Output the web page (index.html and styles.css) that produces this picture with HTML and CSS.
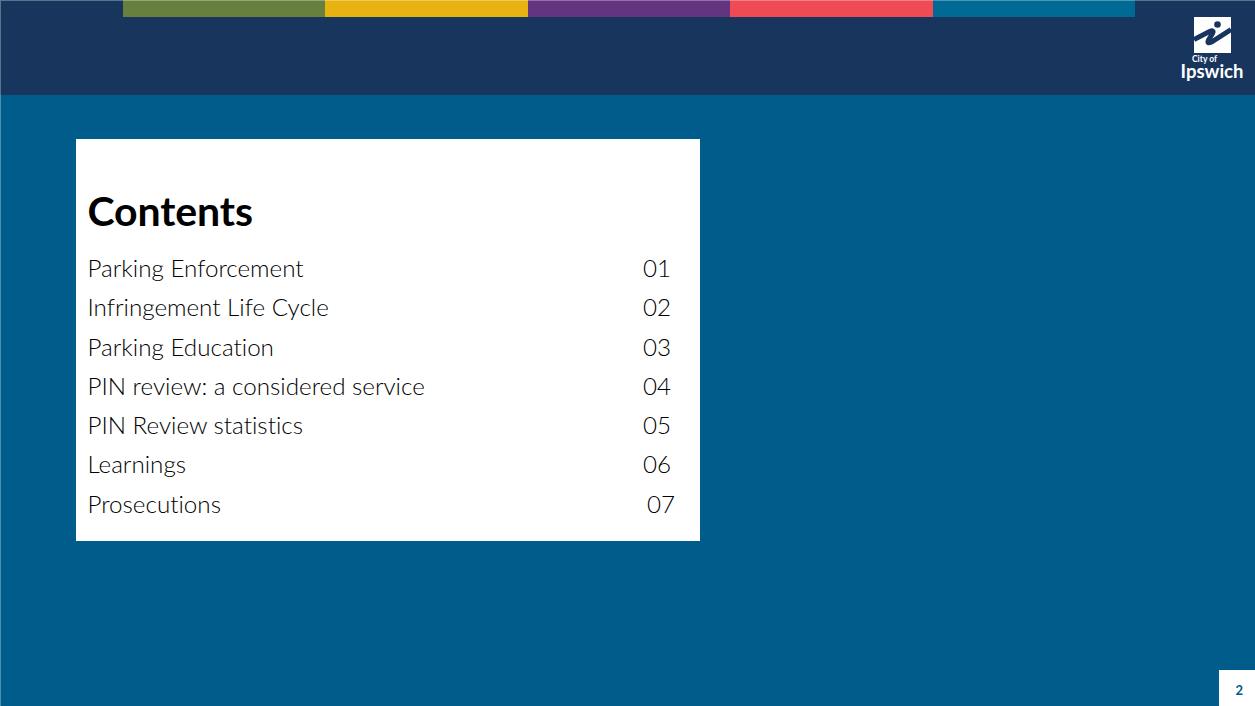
FILE: index.html
```
<!DOCTYPE html>
<html lang="en">
<head>
<meta charset="utf-8">
<title>Contents</title>
<link rel="stylesheet" href="styles.css">
</head>
<body>
<div class="slide">
  <header class="top">
    <div class="stripes">
      <span class="stripe green"></span>
      <span class="stripe yellow"></span>
      <span class="stripe purple"></span>
      <span class="stripe red"></span>
      <span class="stripe blue"></span>
    </div>
    <div class="logo">
      <svg class="mark" viewBox="0 0 37 36" width="37" height="36" aria-hidden="true">
        <rect width="37" height="36" fill="#fff"/>
        <circle cx="23.5" cy="7.5" r="3.3" fill="#18355e"/>
        <path d="M0 22.5 L15.5 14.5 Q20.5 12.5 18.5 16.5 L14.5 23 Q12.5 27.5 17.5 25 L37 12.5" fill="none" stroke="#18355e" stroke-width="5"/>
      </svg>
      <span class="city">City of</span>
      <span class="name">Ipswich</span>
    </div>
  </header>
  <main class="body">
    <section class="card">
      <h1>Contents</h1>
      <ul class="toc">
        <li><span>Parking Enforcement</span><span class="num">01</span></li>
        <li><span>Infringement Life Cycle</span><span class="num">02</span></li>
        <li><span>Parking Education</span><span class="num">03</span></li>
        <li><span>PIN review: a considered service</span><span class="num">04</span></li>
        <li><span>PIN Review statistics</span><span class="num">05</span></li>
        <li><span>Learnings</span><span class="num">06</span></li>
        <li><span>Prosecutions</span><span class="num shifted">07</span></li>
      </ul>
    </section>
  </main>
  <div class="page">2</div>
</div>
</body>
</html>
```
FILE: styles.css
```
html, body {
  margin: 0;
  padding: 0;
}
body {
  width: 1255px;
  height: 706px;
  overflow: hidden;
  font-family: "Lato", "Open Sans", sans-serif;
  font-variant-ligatures: none;
}
.slide {
  position: relative;
  width: 1255px;
  height: 706px;
  background: #005c8a;
  display: flex;
  flex-direction: column;
}
.slide::after {
  content: "";
  position: absolute;
  inset: 0;
  box-shadow: inset 1px 1px 0 rgba(255, 255, 255, 0.3);
  pointer-events: none;
}
.top {
  height: 95px;
  flex: none;
  background: #18355e;
  display: flex;
  justify-content: space-between;
  align-items: flex-start;
  padding-left: 123px;
  box-sizing: border-box;
}
.stripes {
  display: flex;
  width: 1012px;
  height: 16.5px;
}
.stripe {
  flex: 1;
}
.green { background: #68803d; }
.yellow { background: #e8b311; }
.purple { background: #633581; }
.red { background: #f04a55; }
.blue { background: #006a94; }
.logo {
  width: 64px;
  margin-right: 11px;
  padding-top: 17px;
  display: flex;
  flex-direction: column;
  align-items: center;
  color: #fff;
}
.mark {
  display: block;
}
.city {
  align-self: flex-start;
  margin: 2px 0 0 12px;
  font-size: 8.5px;
  line-height: 8px;
  font-weight: 700;
}
.name {
  font-size: 18.5px;
  line-height: 14px;
  font-weight: 700;
  margin-top: 1px;
}
.body {
  flex: 1;
  padding: 44px 0 0 76px;
}
.card {
  width: 624px;
  height: 402px;
  box-sizing: border-box;
  background: #fff;
  padding: 47px 0 0 11.5px;
}
h1 {
  margin: 0;
  font-size: 41px;
  line-height: 50px;
  font-weight: 700;
  color: #000;
  letter-spacing: -0.1px;
}
.toc {
  list-style: none;
  margin: 12px 0 0;
  padding: 0;
  color: #000;
  font-size: 24.2px;
  font-weight: 300;
}
.toc li {
  height: 39.3px;
  line-height: 39.3px;
  display: flex;
  justify-content: space-between;
  width: 582.5px;
}
.num {
  width: 27px;
}
.shifted {
  transform: translateX(4px);
}
.page {
  position: absolute;
  right: 0;
  bottom: 0;
  width: 36px;
  height: 36px;
  box-sizing: border-box;
  background: #fff;
  color: #005c8a;
  font-size: 13px;
  font-weight: 700;
  text-align: right;
  padding: 12px 12px 0 0;
  line-height: 16px;
}
```
